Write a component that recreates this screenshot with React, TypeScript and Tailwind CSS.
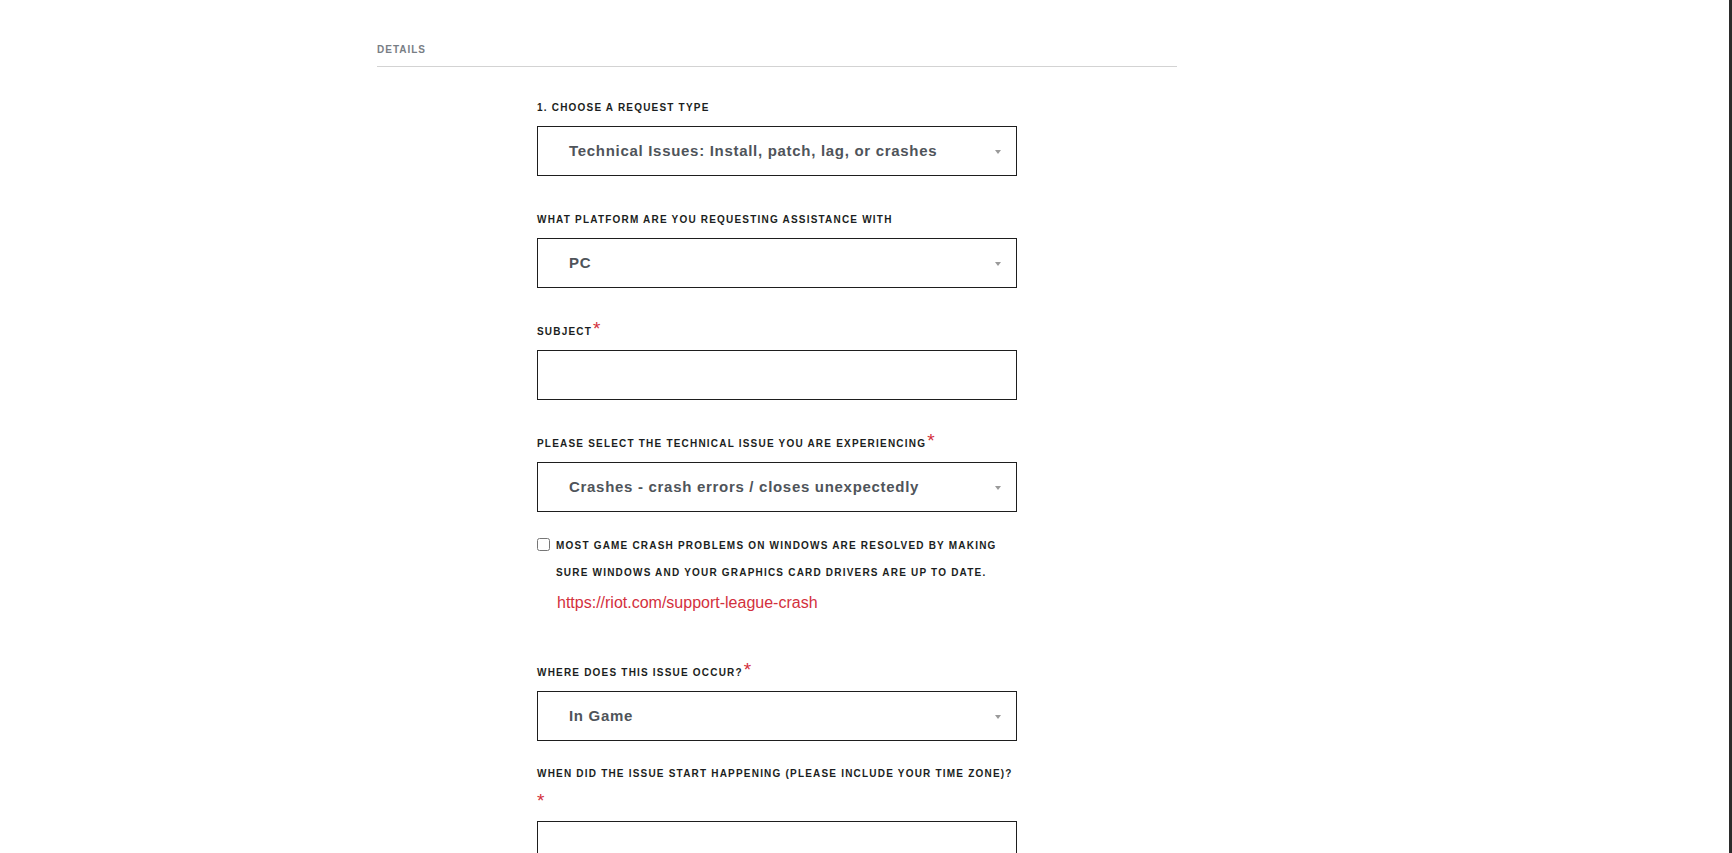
import type { FC, ReactNode } from "react";

const Asterisk: FC = () => (
	<span className="relative -top-[3px] ml-[1px] align-top text-[19px] leading-[14px] font-normal text-[#d3303d]">
		*
	</span>
);

const FieldLabel: FC<{ children: ReactNode; required?: boolean }> = ({
	children,
	required,
}) => (
	<div className="mb-[11px] text-[10px] leading-[14px] font-bold tracking-[1.2px] text-[#1b1e21] uppercase">
		{children}
		{required && <Asterisk />}
	</div>
);

// fake select, the real one is a native dropdown
const SelectBox: FC<{ value: string }> = ({ value }) => (
	<div className="relative flex h-[50px] items-center border border-[#1e1e1e] pl-[31px] pr-[40px]">
		<span className="text-[15px] font-bold tracking-[0.7px] text-[#4f545a]">
			{value}
		</span>
		<svg
			className="absolute right-[15px] top-[23px]"
			width="6"
			height="4"
			viewBox="0 0 6 4"
		>
			<polygon points="0,0 6,0 3,4" fill="#9a9a9a" />
		</svg>
	</div>
);

const TextBox: FC = () => (
	<div className="h-[50px] border border-[#1e1e1e]" />
);

export default function App() {
	return (
		<div className="flex h-[853px] overflow-hidden bg-white font-['Liberation_Sans',Arial,sans-serif]">
			<main className="flex-1 pl-[377px] pt-[43px]">
				<div className="w-[800px]">
					<div className="border-b border-[#d3d3d3] pb-[9px] text-[10px] leading-[14px] font-bold tracking-[1px] text-[#787e85]">
						DETAILS
					</div>

					<form className="ml-[160px] mt-[34px] w-[480px]">
						<FieldLabel>1. Choose a request type</FieldLabel>
						<SelectBox value="Technical Issues: Install, patch, lag, or crashes" />

						<div className="mt-[37px]">
							<FieldLabel>What platform are you requesting assistance with</FieldLabel>
							<SelectBox value="PC" />
						</div>

						<div className="mt-[37px]">
							<FieldLabel required>Subject</FieldLabel>
							<TextBox />
						</div>

						<div className="mt-[37px]">
							<FieldLabel required>
								Please select the technical issue you are experiencing
							</FieldLabel>
							<SelectBox value="Crashes - crash errors / closes unexpectedly" />
						</div>

						<label className="mt-[20px] flex items-start gap-[6px]">
							<input
								type="checkbox"
								className="m-0 mt-[6px] h-[13px] w-[13px] shrink-0"
							/>
							<span className="text-[10px] leading-[27px] font-bold tracking-[1.2px] text-[#1b1e21]">
								MOST GAME CRASH PROBLEMS ON WINDOWS ARE RESOLVED BY MAKING SURE
								WINDOWS AND YOUR GRAPHICS CARD DRIVERS ARE UP TO DATE.
							</span>
						</label>
						<a
							href="#"
							className="ml-[20px] mt-[7px] block text-[16px] leading-[20px] text-[#d3303d]"
						>
							https://riot.com/support-league-crash
						</a>

						<div className="mt-[53px]">
							<FieldLabel required>Where does this issue occur?</FieldLabel>
							<SelectBox value="In Game" />
						</div>

						<div className="mt-[26px]">
							<div className="text-[10px] leading-[14px] font-bold tracking-[1.2px] text-[#1b1e21] uppercase">
								When did the issue start happening (please include your time zone)?
							</div>
							<div className="mb-[10px] mt-[16px] h-[14px] text-[10px] leading-[14px]">
								<span className="relative -top-[3px] align-top text-[19px] leading-[14px] text-[#d3303d]">
									*
								</span>
							</div>
							<TextBox />
						</div>
					</form>
				</div>
			</main>
			<div className="w-[3px] shrink-0 bg-[#2b2b2b]" />
		</div>
	);
}
